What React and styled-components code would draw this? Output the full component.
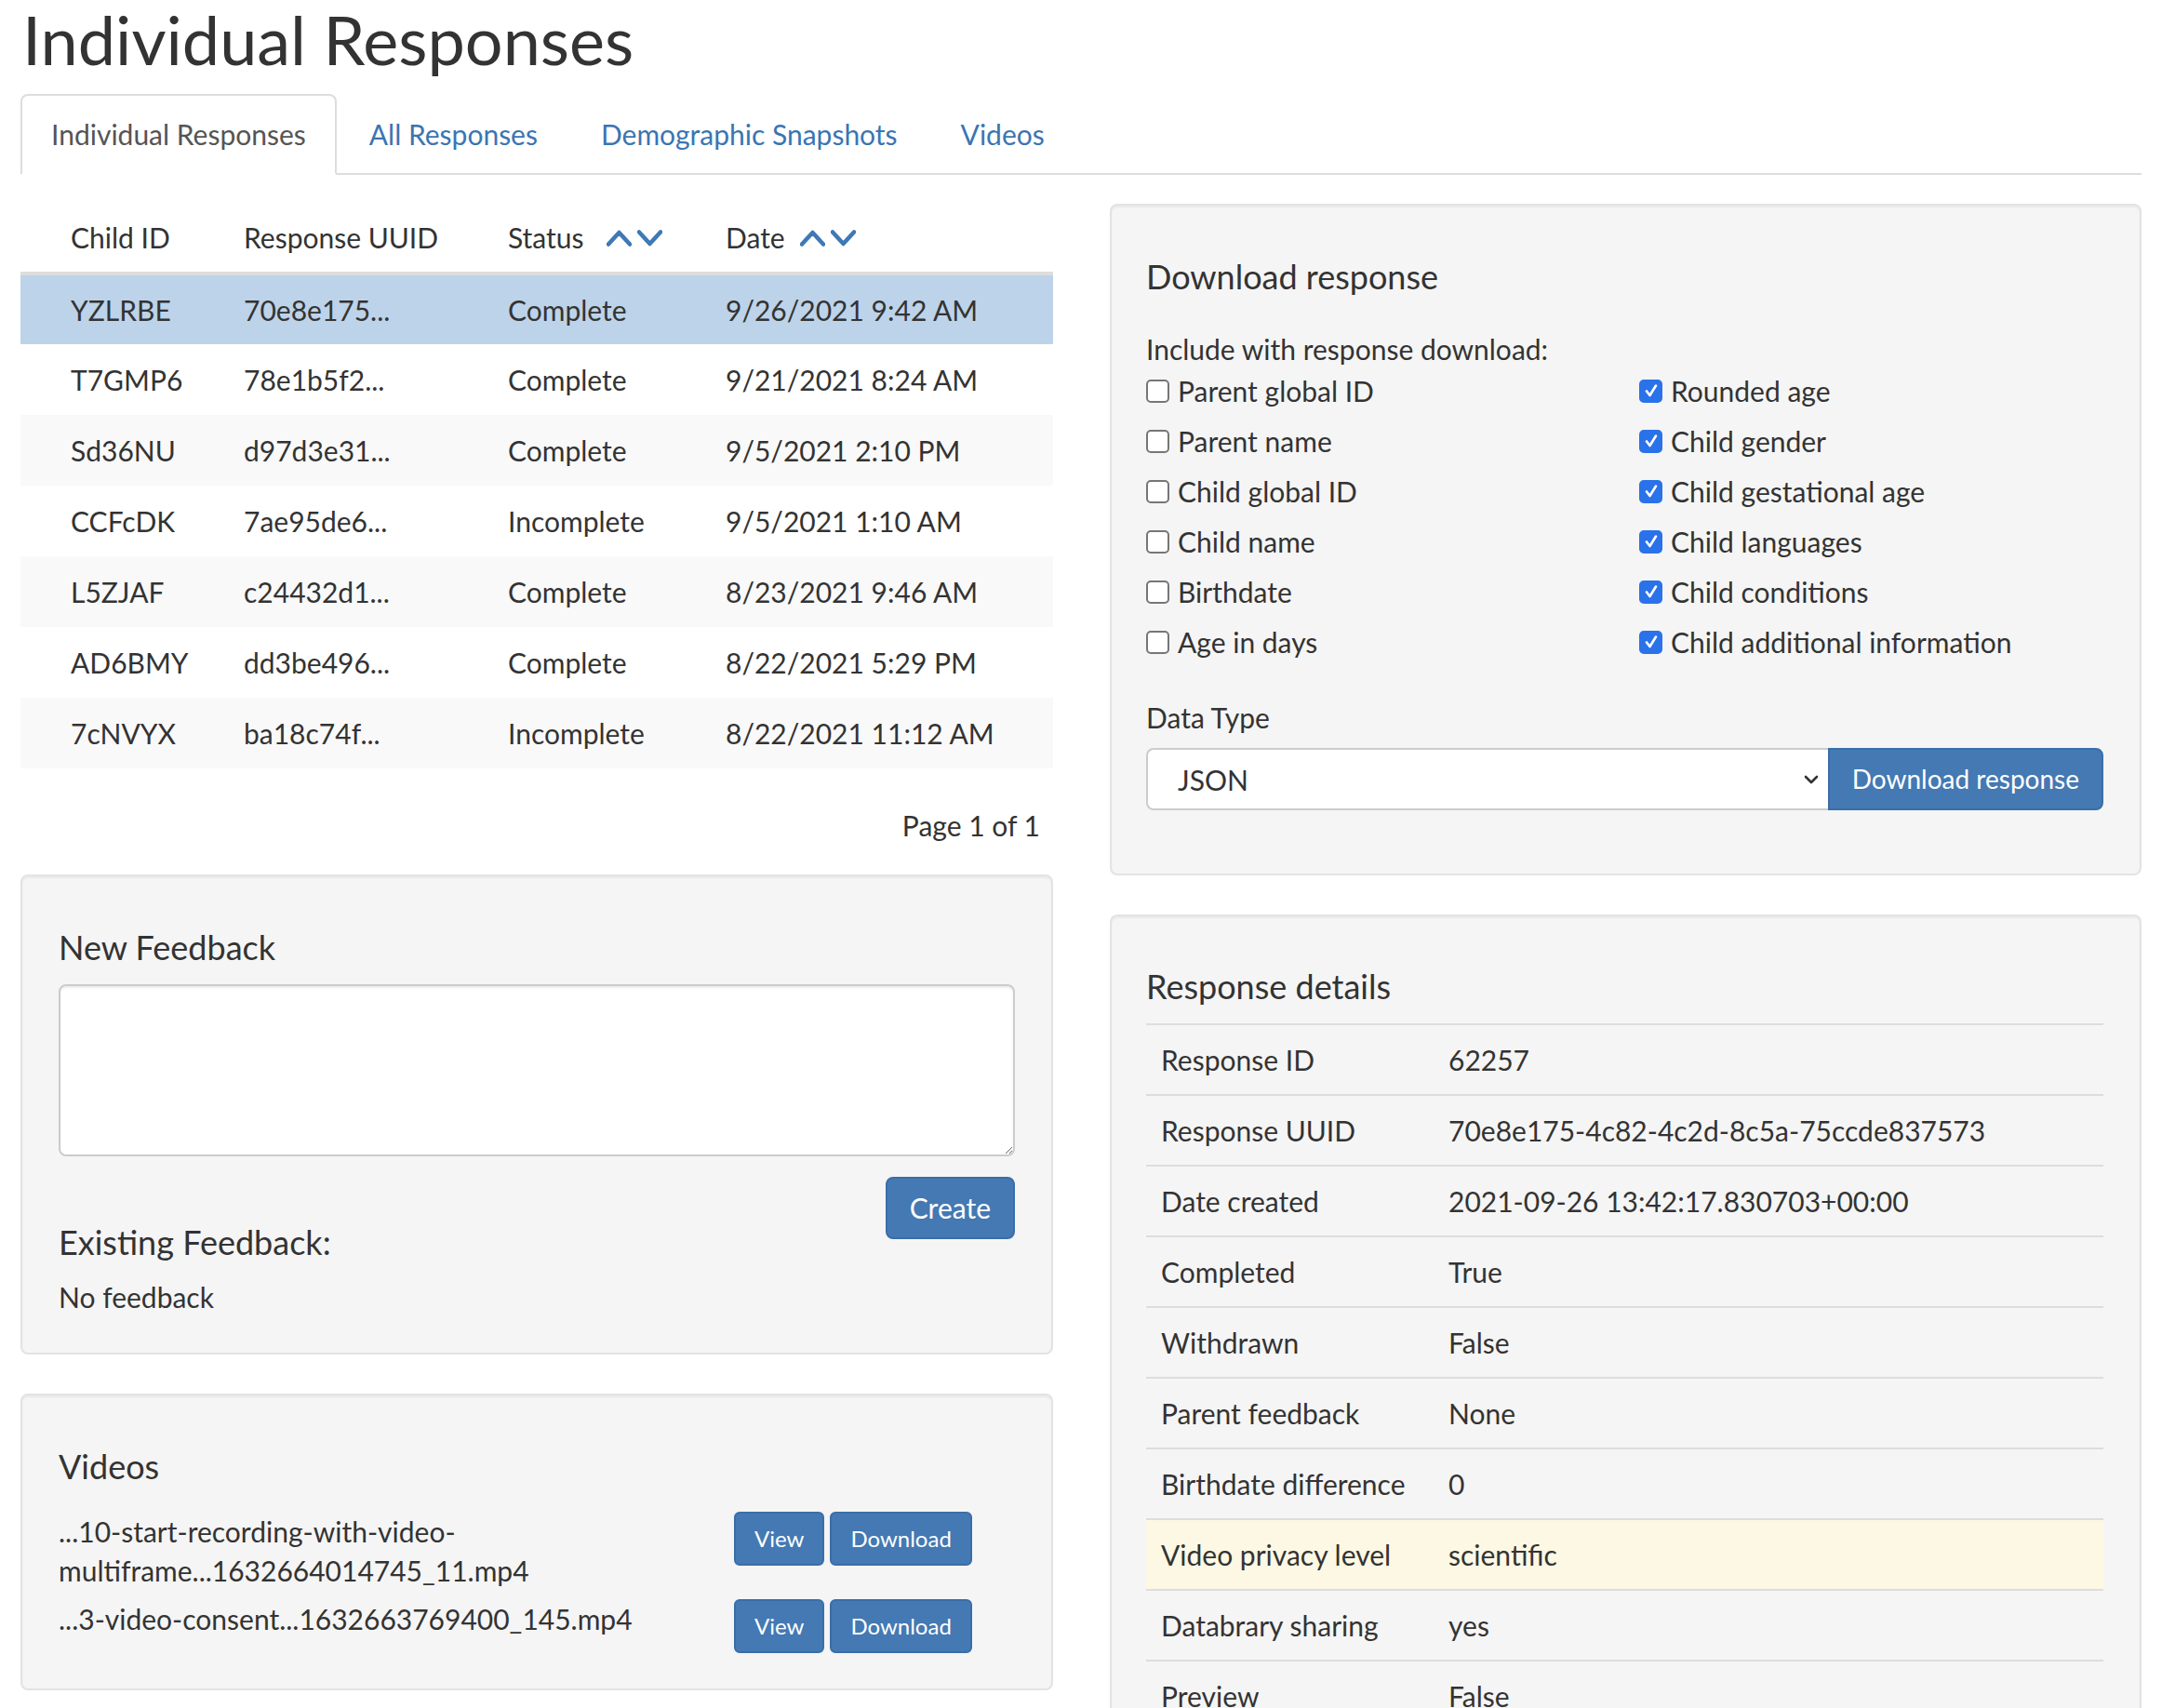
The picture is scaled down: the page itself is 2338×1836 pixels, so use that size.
import React from "react";
import styled, { createGlobalStyle } from "styled-components";

const GlobalStyle = createGlobalStyle`
  * {
    box-sizing: border-box;
  }
  body {
    margin: 0;
    background: #fff;
    color: #333;
    font-family: Lato, "Noto Sans", sans-serif;
    font-size: 30px;
    line-height: 43px;
  }
`;

const Page = styled.div`
  width: 2338px;
  padding: 0 36px 0 22px;
`;

const Title = styled.h1`
  margin: 3px 0 19px 2px;
  font-size: 72px;
  font-weight: 400;
  line-height: 79px;
  color: #333;
`;

const TabBar = styled.nav`
  display: flex;
  gap: 2px;
  height: 87px;
  border-bottom: 2px solid #ddd;
`;

const Tab = styled.a`
  display: block;
  height: 87px;
  padding: 20px 31px;
  border: 2px solid ${(p) => (p.$active ? "#ddd" : "transparent")};
  border-bottom-color: transparent;
  border-radius: 8px 8px 0 0;
  background: ${(p) => (p.$active ? "#fff" : "transparent")};
  color: ${(p) => (p.$active ? "#555" : "#3a75b3")};
  text-decoration: none;
  white-space: nowrap;
`;

const Columns = styled.div`
  display: grid;
  grid-template-columns: 1110px 1109px;
  column-gap: 61px;
  align-items: start;
  margin-top: 31px;
`;

const Column = styled.div`
  display: flex;
  flex-direction: column;
`;

const Table = styled.table`
  width: 100%;
  border-collapse: collapse;
  table-layout: fixed;
`;

const HeadCell = styled.th`
  height: 75px;
  padding: 0 16px 0 ${(p) => (p.$first ? "54px" : "16px")};
  border-bottom: 4px solid #ddd;
  font-weight: 400;
  text-align: left;
  white-space: nowrap;
`;

const HeadInner = styled.span`
  display: inline-flex;
  align-items: center;
`;

const SortArrows = styled.span`
  display: inline-flex;
  align-items: center;
  gap: 6px;
  margin-left: ${(p) => p.$gap}px;
`;

const Row = styled.tr`
  background: ${(p) => (p.$selected ? "#bdd3ea" : p.$striped ? "#f9f9f9" : "#fff")};
  & + & td {
    border-top: 2px solid #ddd;
  }
`;

const Cell = styled.td`
  height: 76px;
  padding: 0 16px 0 ${(p) => (p.$first ? "54px" : "16px")};
  white-space: nowrap;
`;

const Pager = styled.div`
  margin-top: 40px;
  padding-right: 14px;
  text-align: right;
`;

const Well = styled.section`
  margin-top: ${(p) => p.$top}px;
  padding: 38px 39px 38px 37px;
  background: #f5f5f5;
  border: 2px solid #e3e3e3;
  border-radius: 8px;
  box-shadow: inset 0 2px 2px rgba(0, 0, 0, 0.05);
`;

const LeftWell = styled(Well)`
  padding: 38px 39px;
`;

const PanelHeading = styled.h3`
  margin: ${(p) => p.$mt ?? 18}px 0 ${(p) => p.$mb ?? 20}px;
  font-size: 36px;
  font-weight: 400;
  line-height: 40px;
  color: #333;
`;

const FeedbackArea = styled.textarea`
  display: block;
  width: 100%;
  height: 185px;
  border: 2px solid #ccc;
  border-radius: 8px;
  background: #fff;
  box-shadow: inset 0 2px 2px rgba(0, 0, 0, 0.075);
  resize: vertical;
  font: inherit;
`;

const Button = styled.button`
  padding: ${(p) => (p.$small ? "9px 20px" : "10px 24px")};
  border: 2px solid #3b6ea6;
  border-radius: ${(p) => (p.$small ? "6px" : "8px")};
  background: #4479b3;
  color: #fff;
  font-family: Lato, "Noto Sans", sans-serif;
  font-size: ${(p) => (p.$small ? "24px" : "30px")};
  line-height: ${(p) => (p.$small ? "36px" : "43px")};
  white-space: nowrap;
  cursor: pointer;
`;

const CreateButton = styled(Button)`
  float: right;
  margin-top: 22px;
`;

const Plain = styled.p`
  margin: 18px 0 0;
`;

const VideoList = styled.div`
  display: flex;
  flex-direction: column;
  gap: 10px;
  margin-top: 29px;
`;

const VideoRow = styled.div`
  display: grid;
  grid-template-columns: 726px auto;
  align-items: start;
`;

const VideoName = styled.div`
  line-height: 42px;
`;

const ButtonPair = styled.div`
  display: flex;
  gap: 6px;
`;

const IncludeLabel = styled.div`
  margin-top: 37px;
`;

const CheckGrid = styled.div`
  display: grid;
  grid-template-columns: 530px 1fr;
  grid-template-rows: repeat(6, 54px);
  grid-auto-flow: column;
  margin-top: -4px;
`;

const CheckItem = styled.label`
  display: flex;
  align-items: center;
  gap: 9px;
  white-space: nowrap;
`;

const Box = styled.span`
  display: inline-flex;
  align-items: center;
  justify-content: center;
  width: 25px;
  height: 25px;
  border: 2px solid ${(p) => (p.$checked ? "#2a72ea" : "#767676")};
  border-radius: 5px;
  background: ${(p) => (p.$checked ? "#2a72ea" : "#fff")};
`;

const FieldLabel = styled.div`
  margin-top: 33px;
`;

const InputGroup = styled.div`
  display: flex;
  margin-top: 11px;
  margin-bottom: 30px;
`;

const SelectWrap = styled.div`
  position: relative;
  flex: 1;
`;

const Select = styled.select`
  appearance: none;
  width: 100%;
  height: 67px;
  padding: 0 32px;
  border: 2px solid #ccc;
  border-right: none;
  border-radius: 8px 0 0 8px;
  background: #fff;
  color: #333;
  font-family: Lato, "Noto Sans", sans-serif;
  font-size: 30px;
`;

const SelectArrow = styled.svg`
  position: absolute;
  right: 10px;
  top: 29px;
  pointer-events: none;
`;

const GroupButton = styled(Button)`
  height: 67px;
  padding: 0 24px;
  border-radius: 0 8px 8px 0;
  font-size: 28px;
`;

const DetailRow = styled.tr`
  background: ${(p) => (p.$warn ? "#fcf8e3" : "transparent")};
  td {
    border-top: 2px solid #ddd;
  }
`;

const DetailCell = styled.td`
  height: 76px;
  padding: 0 16px;
  width: ${(p) => (p.$label ? "309px" : "auto")};
  white-space: nowrap;
`;

function Chevron({ up }) {
  return (
    <svg width="27" height="18" viewBox="0 0 27 18">
      <polyline
        points={up ? "2,15.5 13.5,3 25,15.5" : "2,2.5 13.5,15 25,2.5"}
        fill="none"
        stroke="#3e79b6"
        strokeWidth="4.5"
        strokeLinecap="round"
        strokeLinejoin="round"
      />
    </svg>
  );
}

function Check({ label, checked }) {
  return (
    <CheckItem>
      <Box $checked={checked}>
        {checked && (
          <svg width="18" height="18" viewBox="0 0 18 18">
            <polyline
              points="4,9.5 7.5,14 14,3.5"
              fill="none"
              stroke="#fff"
              strokeWidth="2.6"
              strokeLinecap="round"
              strokeLinejoin="round"
            />
          </svg>
        )}
      </Box>
      {label}
    </CheckItem>
  );
}

const responses = [
  ["YZLRBE", "70e8e175...", "Complete", "9/26/2021 9:42 AM"],
  ["T7GMP6", "78e1b5f2...", "Complete", "9/21/2021 8:24 AM"],
  ["Sd36NU", "d97d3e31...", "Complete", "9/5/2021 2:10 PM"],
  ["CCFcDK", "7ae95de6...", "Incomplete", "9/5/2021 1:10 AM"],
  ["L5ZJAF", "c24432d1...", "Complete", "8/23/2021 9:46 AM"],
  ["AD6BMY", "dd3be496...", "Complete", "8/22/2021 5:29 PM"],
  ["7cNVYX", "ba18c74f...", "Incomplete", "8/22/2021 11:12 AM"],
];

const includeLeft = [
  "Parent global ID",
  "Parent name",
  "Child global ID",
  "Child name",
  "Birthdate",
  "Age in days",
];

const includeRight = [
  "Rounded age",
  "Child gender",
  "Child gestational age",
  "Child languages",
  "Child conditions",
  "Child additional information",
];

const details = [
  ["Response ID", "62257"],
  ["Response UUID", "70e8e175-4c82-4c2d-8c5a-75ccde837573"],
  ["Date created", "2021-09-26 13:42:17.830703+00:00"],
  ["Completed", "True"],
  ["Withdrawn", "False"],
  ["Parent feedback", "None"],
  ["Birthdate difference", "0"],
  ["Video privacy level", "scientific", true],
  ["Databrary sharing", "yes"],
  ["Preview", "False"],
];

const videos = [
  "...10-start-recording-with-video-multiframe...1632664014745_11.mp4",
  "...3-video-consent...1632663769400_145.mp4",
];

export default function App() {
  return (
    <Page>
      <GlobalStyle />
      <Title>Individual Responses</Title>
      <TabBar>
        <Tab $active>Individual Responses</Tab>
        <Tab href="#">All Responses</Tab>
        <Tab href="#">Demographic Snapshots</Tab>
        <Tab href="#">Videos</Tab>
      </TabBar>

      <Columns>
        <Column>
          <Table>
            <colgroup>
              <col style={{ width: "224px" }} />
              <col style={{ width: "284px" }} />
              <col style={{ width: "234px" }} />
              <col />
            </colgroup>
            <thead>
              <tr>
                <HeadCell $first>Child ID</HeadCell>
                <HeadCell>Response UUID</HeadCell>
                <HeadCell>
                  <HeadInner>
                    Status
                    <SortArrows $gap={24}>
                      <Chevron up />
                      <Chevron />
                    </SortArrows>
                  </HeadInner>
                </HeadCell>
                <HeadCell>
                  <HeadInner>
                    Date
                    <SortArrows $gap={16}>
                      <Chevron up />
                      <Chevron />
                    </SortArrows>
                  </HeadInner>
                </HeadCell>
              </tr>
            </thead>
            <tbody>
              {responses.map((r, i) => (
                <Row key={r[0]} $selected={i === 0} $striped={i % 2 === 0}>
                  <Cell $first>{r[0]}</Cell>
                  <Cell>{r[1]}</Cell>
                  <Cell>{r[2]}</Cell>
                  <Cell>{r[3]}</Cell>
                </Row>
              ))}
            </tbody>
          </Table>

          <Pager>Page 1 of 1</Pager>

          <LeftWell $top={31}>
            <PanelHeading>New Feedback</PanelHeading>
            <FeedbackArea />
            <CreateButton>Create</CreateButton>
            <PanelHeading $mt={72} $mb={0}>
              Existing Feedback:
            </PanelHeading>
            <Plain>No feedback</Plain>
          </LeftWell>

          <LeftWell $top={42}>
            <PanelHeading $mb={0}>Videos</PanelHeading>
            <VideoList>
              {videos.map((v) => (
                <VideoRow key={v}>
                  <VideoName>{v}</VideoName>
                  <ButtonPair>
                    <Button $small>View</Button>
                    <Button $small>Download</Button>
                  </ButtonPair>
                </VideoRow>
              ))}
            </VideoList>
          </LeftWell>
        </Column>

        <Column>
          <Well $top={0}>
            <PanelHeading $mb={0}>Download response</PanelHeading>
            <IncludeLabel>Include with response download:</IncludeLabel>
            <CheckGrid>
              {includeLeft.map((l) => (
                <Check key={l} label={l} />
              ))}
              {includeRight.map((l) => (
                <Check key={l} label={l} checked />
              ))}
            </CheckGrid>
            <FieldLabel>Data Type</FieldLabel>
            <InputGroup>
              <SelectWrap>
                <Select defaultValue="json">
                  <option value="json">JSON</option>
                  <option value="csv">CSV</option>
                </Select>
                <SelectArrow width="16" height="10" viewBox="0 0 16 10">
                  <polyline
                    points="2,2 8,8 14,2"
                    fill="none"
                    stroke="#333"
                    strokeWidth="2.6"
                    strokeLinecap="round"
                    strokeLinejoin="round"
                  />
                </SelectArrow>
              </SelectWrap>
              <GroupButton>Download response</GroupButton>
            </InputGroup>
          </Well>

          <Well $top={42}>
            <PanelHeading $mt={17}>Response details</PanelHeading>
            <Table>
              <tbody>
                {details.map(([k, v, warn]) => (
                  <DetailRow key={k} $warn={warn}>
                    <DetailCell $label>{k}</DetailCell>
                    <DetailCell>{v}</DetailCell>
                  </DetailRow>
                ))}
              </tbody>
            </Table>
          </Well>
        </Column>
      </Columns>
    </Page>
  );
}
